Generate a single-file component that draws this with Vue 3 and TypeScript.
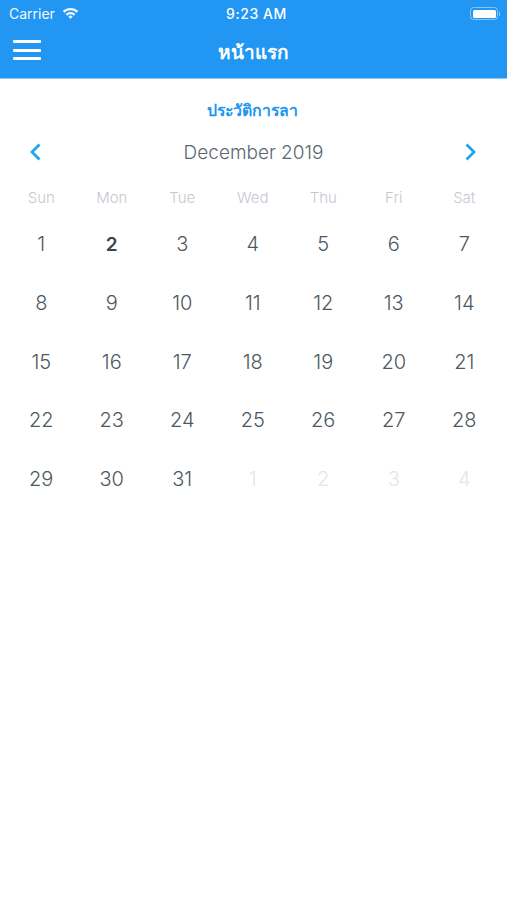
<script setup lang="ts">
const dayNames: string[] = ['Sun', 'Mon', 'Tue', 'Wed', 'Thu', 'Fri', 'Sat']
interface Cell { n: number; muted: boolean; today: boolean }
const cells: Cell[] = []
for (let i = 1; i <= 31; i++) cells.push({ n: i, muted: false, today: i === 2 })
for (let i = 1; i <= 4; i++) cells.push({ n: i, muted: true, today: false })
</script>

<template>
  <div class="page">
    <header class="top">
      <div class="status">
        <div class="status-left">
          <span>Carrier</span>
          <svg class="wifi" width="17" height="12" viewBox="0 0 18 13">
            <path d="M0.6 4.4 A12 12 0 0 1 17.4 4.4 L15.6 6.3 A9.4 9.4 0 0 0 2.4 6.3 Z" fill="#fff" />
            <path d="M3.7 7.5 A7.6 7.6 0 0 1 14.3 7.5 L12.5 9.4 A5 5 0 0 0 5.5 9.4 Z" fill="#fff" />
            <path d="M6.6 10.4 A3.4 3.4 0 0 1 11.4 10.4 L9 12.9 Z" fill="#fff" />
          </svg>
        </div>
        <span class="clock">9:23 AM</span>
        <div class="status-right">
          <div class="battery"><div class="charge"></div></div>
          <div class="nub"></div>
        </div>
      </div>
      <div class="nav">
        <div class="burger"><i></i><i></i><i></i></div>
        <div class="nav-title">หน้าแรก</div>
      </div>
    </header>

    <main class="content">
      <div class="history">ประวัติการลา</div>
      <div class="month-row">
        <svg width="14" height="20" viewBox="0 0 14 20">
          <path d="M11.5 2.5 L4 10 L11.5 17.5" fill="none" stroke="#1ea7e8" stroke-width="2.8" />
        </svg>
        <span class="month">December 2019</span>
        <svg width="14" height="20" viewBox="0 0 14 20">
          <path d="M2.5 2.5 L10 10 L2.5 17.5" fill="none" stroke="#1ea7e8" stroke-width="2.8" />
        </svg>
      </div>
      <div class="grid names">
        <div v-for="d in dayNames" :key="d" class="name">{{ d }}</div>
      </div>
      <div class="grid days">
        <div
          v-for="(c, i) in cells"
          :key="i"
          class="day"
          :class="{ muted: c.muted, today: c.today }"
        >{{ c.n }}</div>
      </div>
    </main>
  </div>
</template>

<style>
html, body { margin: 0; background: #fff; }
</style>

<style scoped>
.page {
  width: 507px;
  height: 900px;
  background: #fff;
  font-family: Inter, "Noto Sans", "Liberation Sans", sans-serif;
  overflow: hidden;
}
.top {
  background: #2196f3;
  height: 78px;
  border-bottom: 1px solid #90cbf9;
  color: #fff;
}
.status {
  height: 27px;
  padding: 0 7px 0 9px;
  display: grid;
  grid-template-columns: 1fr auto 1fr;
  align-items: center;
  font-size: 14px;
}
.status-left { display: flex; align-items: center; gap: 7px; opacity: 0.95; }
.wifi { margin-top: -2px; }
.clock { font-weight: 500; letter-spacing: 0.55px; margin-left: 4px; }
.status-right { display: flex; justify-content: flex-end; align-items: center; }
.battery {
  width: 28px;
  height: 13px;
  box-sizing: border-box;
  border: 1px solid rgba(255, 255, 255, 0.45);
  border-radius: 3.5px;
  padding: 1.5px;
}
.charge { height: 100%; background: #fff; border-radius: 1.5px; }
.nub { width: 1px; height: 4px; background: rgba(255, 255, 255, 0.5); margin-left: 1px; }
.nav {
  height: 51px;
  position: relative;
  display: flex;
  align-items: center;
  justify-content: center;
}
.burger {
  position: absolute;
  left: 13px;
  top: 13px;
  width: 28px;
  display: flex;
  flex-direction: column;
  gap: 5.5px;
}
.burger i { display: block; height: 3px; background: #fff; border-radius: 1px; }
.nav-title {
  font-family: "Noto Sans", "Liberation Sans", sans-serif;
  font-size: 19px;
  font-weight: 700;
  margin-top: -2px;
}
.content { padding: 0 6px; }
.history {
  margin-top: 18px;
  height: 26px;
  line-height: 26px;
  text-align: center;
  color: #2196f3;
  font-family: "Noto Sans", "Liberation Sans", sans-serif;
  font-size: 15.8px;
  font-weight: 700;
  padding-right: 2px;
}
.month-row {
  margin-top: 14px;
  height: 30px;
  padding: 0 23px 0 22px;
  display: flex;
  align-items: center;
  justify-content: space-between;
}
.month { font-size: 19px; color: #5b6770; margin-left: 1px; font-weight: 300; }
.grid { display: grid; grid-template-columns: repeat(7, 70.5px); }
.names { margin-top: 21px; }
.name { height: 20px; line-height: 20px; text-align: center; font-size: 15px; color: #c3c9cf; font-weight: 300; }
.days { margin-top: 7px; grid-auto-rows: 58.7px; }
.day {
  display: flex;
  align-items: center;
  justify-content: center;
  font-size: 20px;
  font-weight: 300;
  color: #4d5860;
}
.today { font-weight: 600; color: #36444c; font-size: 19px; }
.muted { color: #e2e6e9; }
</style>
